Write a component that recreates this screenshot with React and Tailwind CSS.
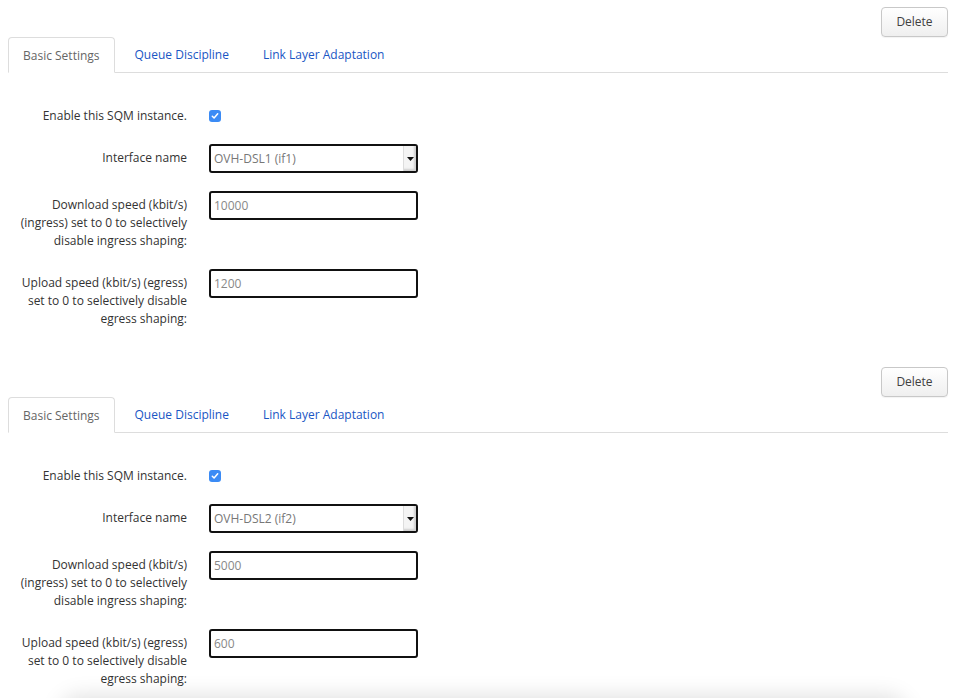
import React from 'react';

const instances = [
  { iface: 'OVH-DSL1 (if1)', down: '10000', up: '1200' },
  { iface: 'OVH-DSL2 (if2)', down: '5000', up: '600' },
];

const Row = ({ label, className = '', children }) => (
  <div className={`flex items-start ${className}`}>
    <div className="w-[179px] shrink-0 text-right text-[12px] leading-[18px] text-[#333] pt-[5px]">
      {label}
    </div>
    <div className="ml-[22px]">{children}</div>
  </div>
);

const SqmInstance = ({ data }) => (
  <div className="pl-2 pr-[9px]">
    {/* Delete */}
    <div className="flex justify-end pt-[7px]">
      <button className="w-[67px] h-[30px] text-[12px] text-[#404040] border border-[#c8c8c8] rounded-[4px] bg-gradient-to-b from-white to-[#efefef] shadow-[0_1px_1px_rgba(0,0,0,0.05)]">
        Delete
      </button>
    </div>

    {/* Tabs */}
    <div className="flex items-end h-[36px] border-b border-[#ddd] text-[12px]">
      <div className="h-[36px] -mb-px px-[14px] pt-px flex items-center border border-[#ddd] border-b-white rounded-t-[4px] bg-white text-[#666]">
        Basic Settings
      </div>
      <div className="h-[35px] pl-[20px] pr-[18px] pt-px flex items-center text-[#1a56c4]">Queue Discipline</div>
      <div className="h-[35px] px-[16px] pt-px flex items-center text-[#1a56c4]">Link Layer Adaptation</div>
    </div>

    {/* Form */}
    <Row label="Enable this SQM instance." className="mt-[29px]">
      <div className="pt-[8px]">
        <div className="w-[12px] h-[12px] rounded-[3px] bg-[#3b8bf5] flex items-center justify-center">
          <svg width="8" height="8" viewBox="0 0 8 8">
            <path d="M1.3 4.2 L3.1 6 L6.7 1.8" fill="none" stroke="white" strokeWidth="1.5" strokeLinecap="round" strokeLinejoin="round" />
          </svg>
        </div>
      </div>
    </Row>

    <Row label="Interface name" className="mt-[19px]">
      <div className="w-[209px] h-[29px] flex border-2 border-[#111] rounded-[3px] bg-white overflow-hidden">
        <div className="flex-1 pl-[3px] flex items-center text-[12px] text-[#777]">{data.iface}</div>
        <div className="w-[13px] flex items-center justify-center bg-[#f4f4f4] border-l border-[#ddd] shadow-[inset_-2px_-2px_2px_rgba(0,0,0,0.15)]">
          <svg width="7" height="4" viewBox="0 0 7 4">
            <path d="M0 0 L7 0 L3.5 4 Z" fill="#111" />
          </svg>
        </div>
      </div>
    </Row>

    <Row
      label={<>Download speed (kbit/s)<br />(ingress) set to 0 to selectively<br />disable ingress shaping:</>}
      className="mt-[18px]"
    >
      <div className="w-[209px] h-[29px] flex items-center pl-[3px] border-2 border-[#111] rounded-[3px] bg-white text-[12px] text-[#888]">
        {data.down}
      </div>
    </Row>

    <Row
      label={<>Upload speed (kbit/s) (egress)<br />set to 0 to selectively disable<br />egress shaping:</>}
      className="mt-[19px]"
    >
      <div className="w-[209px] h-[29px] flex items-center pl-[3px] border-2 border-[#111] rounded-[3px] bg-white text-[12px] text-[#888]">
        {data.up}
      </div>
    </Row>

    <div className="h-[32px]" />
  </div>
);

export default function App() {
  return (
    <div className="relative w-[957px] h-[698px] overflow-hidden bg-white" style={{ fontFamily: '"Open Sans", "Noto Sans", sans-serif' }}>
      {instances.map(d => (
        <SqmInstance key={d.iface} data={d} />
      ))}
      {/* footer shadow at bottom edge */}
      <div className="absolute left-[60px] right-[50px] top-[700px] h-[40px] bg-white shadow-[0_-4px_22px_rgba(0,0,0,0.13)] rounded-[20px]" />
    </div>
  );
}
